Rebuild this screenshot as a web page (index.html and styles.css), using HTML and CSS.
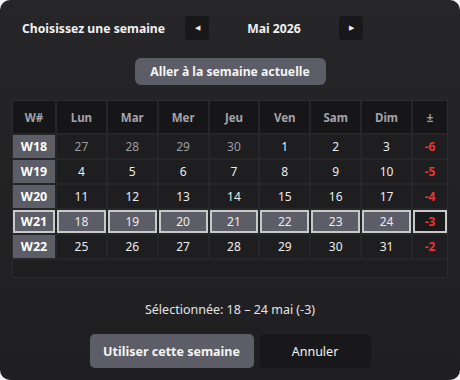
FILE: index.html
```html
<!DOCTYPE html>
<html lang="fr">
<head>
<meta charset="utf-8">
<link rel="stylesheet" href="styles.css">
</head>
<body>
<div class="panel">
  <div class="header">
    <div class="title">Choisissez une semaine</div>
    <div class="nav">
      <button class="navbtn">&#9664;</button>
      <div class="month">Mai 2026</div>
      <button class="navbtn">&#9654;</button>
    </div>
  </div>
  <div class="today-row"><button class="today">Aller à la semaine actuelle</button></div>
  <div class="table-wrap">
    <table class="cal">
      <thead>
        <tr><th class="wk">W#</th><th>Lun</th><th>Mar</th><th>Mer</th><th>Jeu</th><th>Ven</th><th>Sam</th><th>Dim</th><th class="pm">±</th></tr>
      </thead>
      <tbody>
        <tr><td class="wk">W18</td><td class="out">27</td><td class="out">28</td><td class="out">29</td><td class="out">30</td><td>1</td><td>2</td><td>3</td><td class="pm">-6</td></tr>
        <tr><td class="wk">W19</td><td>4</td><td>5</td><td>6</td><td>7</td><td>8</td><td>9</td><td>10</td><td class="pm">-5</td></tr>
        <tr><td class="wk">W20</td><td>11</td><td>12</td><td>13</td><td>14</td><td>15</td><td>16</td><td>17</td><td class="pm">-4</td></tr>
        <tr class="sel"><td class="wk"><span>W21</span></td><td><span>18</span></td><td><span>19</span></td><td><span>20</span></td><td><span>21</span></td><td><span>22</span></td><td><span>23</span></td><td><span>24</span></td><td class="pm"><span>-3</span></td></tr>
        <tr><td class="wk">W22</td><td>25</td><td>26</td><td>27</td><td>28</td><td>29</td><td>30</td><td>31</td><td class="pm">-2</td></tr>
      </tbody>
    </table>
  </div>
  <div class="summary">Sélectionnée: 18 – 24 mai (-3)</div>
  <div class="actions">
    <button class="primary">Utiliser cette semaine</button>
    <button class="cancel">Annuler</button>
  </div>
</div>
</body>
</html>
```
FILE: styles.css
```css
html, body {
  margin: 0;
  padding: 0;
  background: #f3f3f3;
}
.panel {
  width: 460px;
  height: 380px;
  box-sizing: border-box;
  border-radius: 10px;
  background: linear-gradient(#262628, #1f1f21);
  font-family: "Noto Sans", "Open Sans", sans-serif;
  color: #f0f0f0;
  padding: 16px 12px 0 12px;
  display: flex;
  flex-direction: column;
}
.header {
  display: flex;
  align-items: center;
  height: 24px;
  padding-left: 10px;
}
.title {
  font-weight: 700;
  font-size: 12.2px;
  width: 163px;
}
.nav {
  display: flex;
  align-items: center;
}
.navbtn {
  width: 24px;
  height: 24px;
  border: none;
  border-radius: 4px;
  background: #18181a;
  color: #f0f0f0;
  font-size: 7px;
  padding: 0;
  display: flex;
  align-items: center;
  justify-content: center;
}
.month {
  width: 130px;
  text-align: center;
  font-weight: 700;
  font-size: 12.2px;
}
.today-row {
  display: flex;
  justify-content: center;
  margin-top: 18px;
}
.today {
  width: 191px;
  height: 27px;
  border: none;
  border-radius: 6px;
  background: #5c5d66;
  color: #f4f4f4;
  font-family: inherit;
  font-weight: 700;
  font-size: 12.2px;
  padding: 0;
}
.table-wrap {
  margin-top: 15px;
  height: 178px;
  box-sizing: border-box;
  border: 1px solid #2c2c2f;
  background: #1e1e20;
}
.cal {
  width: 100%;
  table-layout: fixed;
  border-collapse: collapse;
  font-size: 12px;
}
.cal th, .cal td {
  border: 2px solid #262628;
  text-align: center;
  padding: 0;
}
.cal tr:first-child th { border-top: none; }
.cal th:first-child, .cal td:first-child { border-left: none; }
.cal th:last-child, .cal td:last-child { border-right: none; }
.cal th {
  height: 32px;
  background: #161618;
  color: #a3a3ab;
  font-weight: 700;
  font-size: 11.5px;
}
.cal td {
  height: 23px;
  color: #ececec;
}
.cal th.wk { width: 42px; }
.cal th.pm { width: 34px; }
.cal td.wk {
  background: #5c5d66;
  color: #ffffff;
  font-weight: 700;
  font-size: 12.5px;
}
.cal td.out { color: #9c9ca0; }
.cal td.pm {
  color: #e53535;
  font-weight: 700;
}
.cal tr.sel td {
  padding: 0;
  background: #1e1e20;
}
.cal tr.sel td span {
  display: flex;
  align-items: center;
  justify-content: center;
  height: 23px;
  box-sizing: border-box;
  border: 2px solid #c9c9c9;
  background: #5c5d66;
}
.cal tr.sel td.pm span { background: #1a1a1c; }
.summary {
  text-align: center;
  font-size: 12.5px;
  color: #e4e4e4;
  margin-top: 23px;
}
.actions {
  display: flex;
  justify-content: center;
  gap: 6px;
  margin-top: 16px;
}
.primary, .cancel {
  height: 34px;
  border: none;
  border-radius: 5px;
  font-family: inherit;
  font-size: 12.5px;
  color: #f4f4f4;
  padding: 0;
}
.primary {
  width: 164px;
  background: #5c5d66;
  font-weight: 700;
}
.cancel {
  width: 111px;
  background: #18181a;
}
```
